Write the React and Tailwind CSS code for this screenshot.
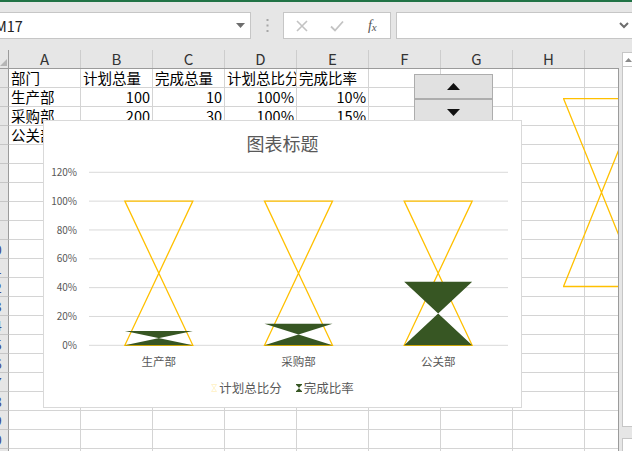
import React from "react";

const cols = ["A", "B", "C", "D", "E", "F", "G", "H", ""];
const cells = [
  ["部门", "计划总量", "完成总量", "计划总比分", "完成比率"],
  ["生产部", "100", "10", "100%", "10%"],
  ["采购部", "200", "30", "100%", "15%"],
  ["公关部", "300", "132", "100%", "44%"],
];

const series = [
  { name: "生产部", plan: 100, done: 10 },
  { name: "采购部", plan: 100, done: 15 },
  { name: "公关部", plan: 100, done: 44 },
];

// plot geometry, chart-relative px
const px0 = 45;
const px1 = 464;
const base = 224.3;
const perPct = 1.4417;
const band = (px1 - px0) / 3;
const hw = 34;

function glass(cx, top, bottom) {
  return `${cx - hw},${top} ${cx + hw},${top} ${cx - hw},${bottom} ${cx + hw},${bottom}`;
}

function Chart() {
  return (
    <div className="absolute left-[43px] top-[51px] w-[479px] h-[288px] bg-white border border-[#d9d9d9]">
      <div className="h-[34px] pt-[11px] text-center text-[18px] leading-[22px] text-[#595959]">图表标题</div>
      <svg width="477" height="222" viewBox="0 34 477 222" className="block">
        {[0, 20, 40, 60, 80, 100, 120].map((p) => {
          const y = base - p * perPct;
          return (
            <g key={p}>
              <line x1={px0} x2={px1} y1={y} y2={y} stroke="#d9d9d9" strokeWidth="1" />
              <text x="33" y={y + 3.6} textAnchor="end" fontSize="10" fill="#595959">
                {p}%
              </text>
            </g>
          );
        })}
        {series.map((s, i) => {
          const cx = px0 + band * i + band / 2;
          return (
            <g key={s.name}>
              <polygon
                points={glass(cx, base - s.plan * perPct, base)}
                fill="none"
                stroke="#ffc000"
                strokeWidth="1.3"
              />
              <polygon points={glass(cx, base - s.done * perPct, base)} fill="#375623" />
              <text x={cx} y="245" textAnchor="middle" fontSize="11.5" fill="#595959">
                {s.name}
              </text>
            </g>
          );
        })}
      </svg>
      <div className="mt-[3px] flex justify-center items-center gap-[14px] text-[12.5px] leading-[16px] text-[#595959]">
        <div className="flex items-center gap-[2px]">
          <svg width="6" height="8" viewBox="0 0 6 8">
            <polygon points="0.5,0.5 5.5,0.5 0.5,7.5 5.5,7.5" fill="none" stroke="#fff0c0" strokeWidth="0.8" />
          </svg>
          <span>计划总比分</span>
        </div>
        <div className="flex items-center gap-[2px]">
          <svg width="6" height="8" viewBox="0 0 6 8">
            <rect x="0" y="0" width="6" height="1.2" fill="#375623" />
            <rect x="0" y="6.8" width="6" height="1.2" fill="#375623" />
            <polygon points="0.5,1 5.5,1 0.5,7 5.5,7" fill="#375623" />
          </svg>
          <span>完成比率</span>
        </div>
      </div>
    </div>
  );
}

function FormulaBar() {
  return (
    <div className="h-[48px] flex items-start pt-[10px]">
      <div className="w-[251px] h-[27px] bg-white border border-l-0 border-[#c6c6c6] flex items-center justify-between pr-[5px]">
        <span className="ml-[-5px] text-[14.5px] text-[#222]">M17</span>
        <svg width="9" height="5" viewBox="0 0 9 5">
          <polygon points="0,0 9,0 4.5,5" fill="#6d6d6d" />
        </svg>
      </div>
      <div className="w-[32px] h-[27px] flex items-center justify-center">
        <svg width="3" height="13" viewBox="0 0 3 13">
          <rect x="0.5" y="0" width="2" height="2" fill="#a6a6a6" />
          <rect x="0.5" y="5.5" width="2" height="2" fill="#a6a6a6" />
          <rect x="0.5" y="11" width="2" height="2" fill="#a6a6a6" />
        </svg>
      </div>
      <div className="w-[108px] h-[27px] bg-white border border-[#c6c6c6] flex items-center">
        <div className="w-[36px] flex justify-center">
          <svg width="12" height="12" viewBox="0 0 12 12">
            <path d="M1 1 L11 11 M11 1 L1 11" stroke="#c3c3c3" strokeWidth="1.6" />
          </svg>
        </div>
        <div className="w-[36px] flex justify-center">
          <svg width="14" height="12" viewBox="0 0 14 12">
            <path d="M1 6.5 L5 10.5 L13 1.5" fill="none" stroke="#c3c3c3" strokeWidth="1.8" />
          </svg>
        </div>
        <div className="w-[36px] flex justify-center font-['Liberation_Serif',serif] italic text-[14px] text-[#555] leading-none">
          <span>f</span>
          <span className="text-[11px] mt-[3px]">x</span>
        </div>
      </div>
      <div className="ml-[5px] flex-1 h-[27px] bg-white border border-r-0 border-[#c6c6c6] flex items-center justify-end pr-[3px]">
        <svg width="10" height="7" viewBox="0 0 10 7">
          <path d="M1 1 L5 5 L9 1" fill="none" stroke="#6d6d6d" strokeWidth="2" />
        </svg>
      </div>
    </div>
  );
}

function HeaderRow() {
  return (
    <div className="grid grid-cols-[9px_repeat(8,72px)_34px] h-[19px] border-b border-[#9b9b9b]">
      <div className="border-r border-[#9b9b9b] flex items-end justify-end pb-[2px] pr-[1px]">
        <svg width="7" height="7" viewBox="0 0 7 7">
          <polygon points="7,0 7,7 0,7" fill="#b5b5b5" />
        </svg>
      </div>
      {cols.map((c, i) => (
        <div
          key={i}
          className={
            "flex items-center justify-center text-[15px] leading-[18px] text-[#333] " +
            (i < 8 ? "border-r border-[#cdcdcd]" : "")
          }
        >
          {c}
        </div>
      ))}
    </div>
  );
}

function Body() {
  const rows = Array.from({ length: 21 }, (_, r) => r);
  return (
    <div className="relative w-[619px] overflow-hidden border-r border-[#9b9b9b]">
      {rows.map((r) => (
        <div key={r} className="grid grid-cols-[9px_repeat(8,72px)_33px] h-[19px]">
          <div className="bg-[#e6e6e6] border-r border-r-[#9b9b9b] border-b border-b-[#c6c6c6] overflow-hidden">
            <div className="w-[26px] ml-[-19px] text-center text-[14px] leading-[18px] text-[#3a4a8a]">{r + 1}</div>
          </div>
          {cols.map((_, c) => {
            const v = cells[r] ? cells[r][c] : undefined;
            const right = r > 0 && c > 0;
            return (
              <div
                key={c}
                className={
                  "bg-white border-b border-[#d4d4d4] overflow-hidden whitespace-nowrap px-[2px] text-[14.5px] leading-[18px] text-black " +
                  (c < 8 ? "border-r " : "") +
                  (right ? "text-right" : "text-left")
                }
              >
                {v}
              </div>
            );
          })}
        </div>
      ))}

      <div className="absolute left-[414px] top-[5px] w-[79px] h-[60px] bg-[#e1e1e1] border border-[#adadad]">
        <div className="h-[25px] border-b-2 border-[#adadad] flex items-center justify-center">
          <svg width="13" height="7" viewBox="0 0 13 7">
            <polygon points="6.5,0 13,7 0,7" fill="#111" />
          </svg>
        </div>
        <div className="pt-[9px] flex justify-center">
          <svg width="13" height="7" viewBox="0 0 13 7">
            <polygon points="0,0 13,0 6.5,7" fill="#111" />
          </svg>
        </div>
      </div>

      <svg className="absolute left-[563px] top-[29px]" width="77" height="190" viewBox="0 0 77 190">
        <polygon points="0.5,0.5 76.5,0.5 0.5,188.5 76.5,188.5" fill="none" stroke="#ffc000" strokeWidth="1.3" />
      </svg>

      <Chart />
    </div>
  );
}

function Scrollbar() {
  return (
    <div className="flex-1 pl-[3px] pt-[2px]">
      <div className="h-[375px] bg-white border border-[#c6c6c6] border-r-0">
        <div className="h-[14px] border-b border-[#c6c6c6] flex items-start pl-[2px] pt-[5px]">
          <svg width="7" height="4" viewBox="0 0 7 4">
            <polygon points="3.5,0 7,4 0,4" fill="#8a8a8a" />
          </svg>
        </div>
      </div>
      <div className="mt-[11px] h-[20px] bg-white border border-[#c6c6c6] border-r-0" />
    </div>
  );
}

export default function App() {
  return (
    <div className="w-[632px] h-[451px] overflow-hidden bg-[#e6e6e6] font-['Noto_Sans_CJK_SC','Noto_Sans',sans-serif]">
      <div className="h-[2px] bg-[#217346]" />
      <FormulaBar />
      <div className="flex">
        <div className="w-[619px]">
          <HeaderRow />
          <Body />
        </div>
        <Scrollbar />
      </div>
    </div>
  );
}
